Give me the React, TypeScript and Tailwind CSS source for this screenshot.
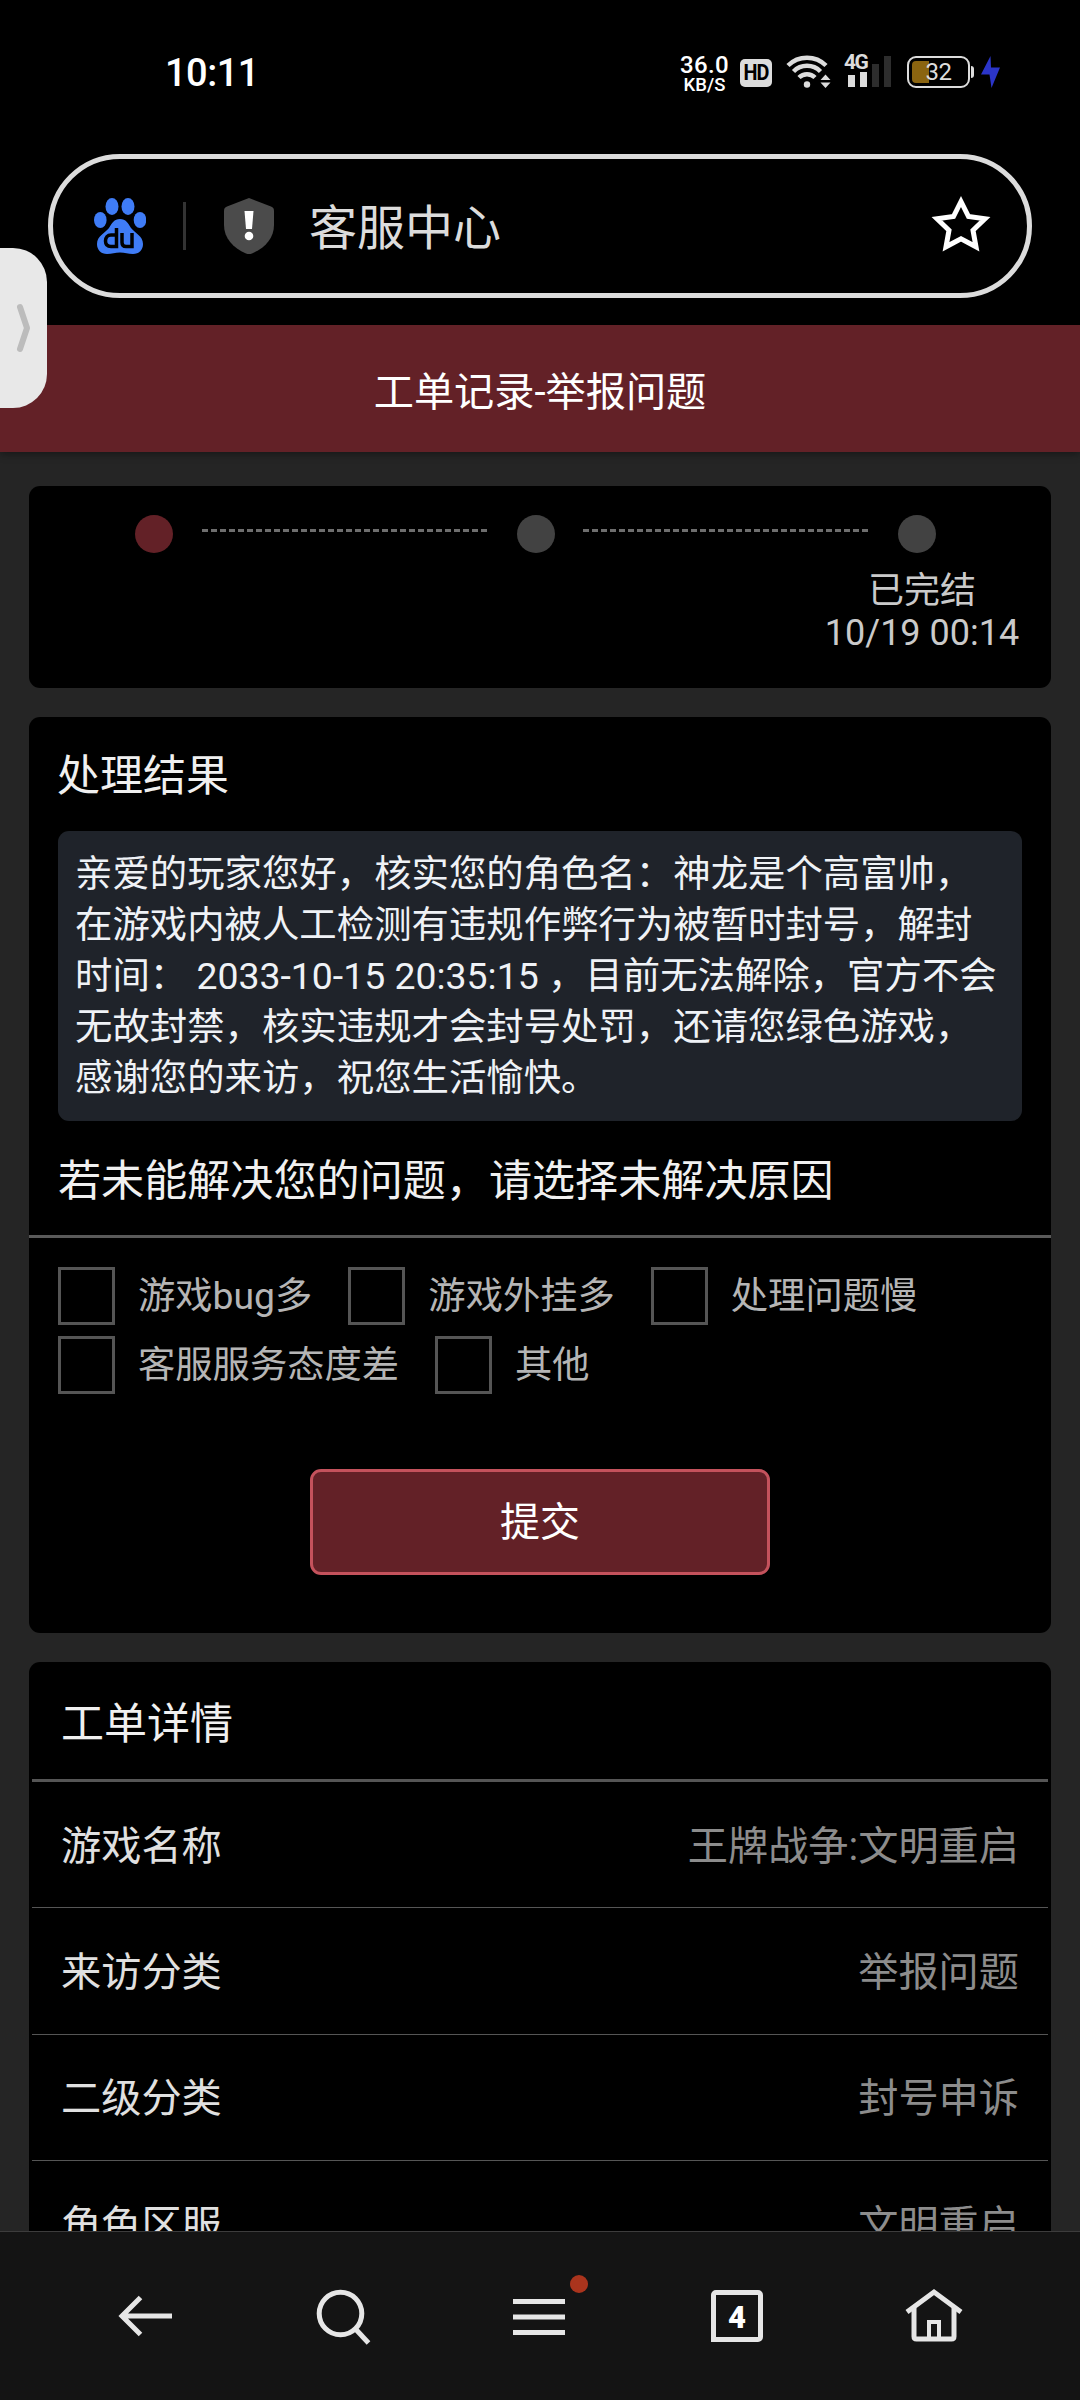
import type { ReactNode } from "react";

const RESULT_LINES = [
  "亲爱的玩家您好，核实您的角色名：神龙是个高富帅，",
  "在游戏内被人工检测有违规作弊行为被暂时封号，解封",
  "时间： 2033-10-15 20:35:15 ，目前无法解除，官方不会",
  "无故封禁，核实违规才会封号处罚，还请您绿色游戏，",
  "感谢您的来访，祝您生活愉快。",
];

const REASONS = [["游戏bug多", "游戏外挂多", "处理问题慢"], ["客服服务态度差", "其他"]];

const DETAILS = [
  { label: "游戏名称", value: "王牌战争:文明重启" },
  { label: "来访分类", value: "举报问题" },
  { label: "二级分类", value: "封号申诉" },
  { label: "角色区服", value: "文明重启" },
];

function StatusBar() {
  return (
    <div className="flex h-[88px] items-end justify-between pl-[165px] pr-[80px] text-white">
      <span className="text-[38px] font-medium leading-[30px] tracking-[-0.5px]">10:11</span>
      <div className="flex h-[34px] items-end">
        <div className="-mb-[6px] flex w-[51px] flex-col items-center font-medium">
          <span className="text-[24px] leading-[22px] tracking-[0.3px]">36.0</span>
          <span className="text-[18.500px] leading-[18px]">KB/S</span>
        </div>
        <div className="ml-[10px] mb-px flex h-[28px] w-[32px] items-center justify-center rounded-[5px] bg-[#dcdcdc] text-[22px] font-bold leading-none tracking-[-1px] text-black">
          <span className="scale-x-90">HD</span>
        </div>
        <svg className="ml-[14px]" width="46" height="34" viewBox="0 0 46 34" fill="none" stroke="#dcdcdc" strokeWidth="4.500">
          <path d="M2 11.500a27 27 0 0 1 38 0" />
          <path d="M7.500 17.500a19 19 0 0 1 27 0" />
          <path d="M13 23.500a11.500 11.500 0 0 1 16 0" />
          <circle cx="21" cy="30.500" r="3.200" fill="#dcdcdc" stroke="none" />
          <path d="M34.500 26h10l-5-5.500zM34.500 28.500h10l-5 5.500z" fill="#dcdcdc" stroke="none" />
        </svg>
        <div className="relative ml-[16px] mb-px flex items-end gap-[5px]">
          <span className="absolute -left-[4px] -top-[3px] text-[21px] font-bold leading-[18px] tracking-[-1.500px] text-[#dcdcdc]">4G</span>
          <div className="h-[12px] w-[7px] bg-[#dcdcdc]" />
          <div className="h-[15px] w-[7px] bg-[#dcdcdc]" />
          <div className="h-[23px] w-[7px] bg-[#2d2d2d]" />
          <div className="h-[31px] w-[7px] bg-[#2d2d2d]" />
        </div>
        <div className="relative ml-[16px] flex h-[32px] w-[63px] items-center justify-center rounded-[9px] border-2 border-[#dcdcdc] text-[24px] leading-none text-[#dcdcdc]">
          <div className="absolute left-[3px] top-[3px] h-[22px] w-[17px] rounded-l-[4px] bg-[#8a6410]" />
          <span className="relative tracking-[-0.5px]">32</span>
        </div>
        <div className="mb-[10px] ml-px h-[12px] w-[3px] rounded-r-sm bg-[#dcdcdc]" />
        <svg className="ml-[7px]" width="19" height="32" viewBox="0 0 19 32" fill="#2b35c9">
          <path d="M9.500 0L0 18.500h8.500L10.500 32 19 11.500h-9z" />
        </svg>
      </div>
    </div>
  );
}

function AddressBar() {
  return (
    <div className="mx-[48px] mt-[66px] flex h-[144px] items-center rounded-full border-[5px] border-[#dcdcdc] pl-[41px] pr-[36px]">
      <svg width="52" height="56" viewBox="0 0 52 56" fill="#3f7cf6">
        <ellipse cx="18" cy="8.500" rx="6.500" ry="8.500" />
        <ellipse cx="34" cy="8.500" rx="6.500" ry="8.500" />
        <ellipse cx="6.300" cy="22" rx="6.300" ry="8" />
        <ellipse cx="46" cy="22" rx="6.300" ry="8" />
        <path d="M26 21c6 0 8 4 11 9 4 5 12 8 12 16 0 6-4 10-10 10-5 0-8-1.500-13-1.500S18 56 13 56C7 56 3 52 3 46c0-8 8-11 12-16 3-5 5-9 11-9z" />
        <g fill="none" stroke="#000" strokeWidth="3.500">
          <path d="M22.500 30v18.500h-5.500c-3.500 0-5.500-2-5.500-5.500s2-6 5.500-6h5.500" />
          <path d="M28 35v9.500c0 3 1.500 4 4 4h6V35" />
        </g>
      </svg>
      <div className="ml-[37px] h-[48px] w-[3px] bg-[#333]" />
      <svg className="ml-[38px]" width="50" height="56" viewBox="0 0 50 56">
        <path d="M25 0l22 8.500c2 .8 3 2 3 4.500v14c0 13-9 23-22 28.500q-3 1-6 0C9 50 0 40 0 27V13c0-2.500 1-3.700 3-4.500z" fill="#4b4b4b" />
        <path d="M20.500 13h9l-1.500 18h-6z" fill="#fff" />
        <circle cx="25" cy="38" r="4.300" fill="#fff" />
      </svg>
      <span className="ml-[35px] flex-1 pt-[5px] text-[48px] leading-none text-[#dcdcdc]">客服中心</span>
      <svg className="mb-[6px]" width="60" height="57" viewBox="0 0 60 57" fill="none" stroke="#fff" strokeWidth="5">
        <path d="M30 6.500l7.500 15 16.500 2.300-12 11.500 3 16.500-15-8-15 8 3-16.500-12-11.500 16.500-2.300z" />
      </svg>
    </div>
  );
}

function Dash() {
  return (
    <div className="mt-[14px] h-[3px] w-[286px] bg-[repeating-linear-gradient(90deg,#6e6e6e_0_6px,transparent_6px_9px)]" />
  );
}

function Progress() {
  return (
    <section className="h-[202px] rounded-[11px] bg-black pt-[29px]">
      <div className="flex items-start justify-between pl-[106px] pr-[115px]">
        <div className="size-[38px] rounded-full bg-[#632127]" />
        <Dash />
        <div className="size-[38px] rounded-full bg-[#424242]" />
        <Dash />
        <div className="size-[38px] rounded-full bg-[#424242]" />
      </div>
      <div className="ml-auto mr-[31px] mt-[17px] w-[196px] whitespace-nowrap text-center text-[36px] leading-[42px] text-[#cacaca]">
        <p>已完结</p>
        <p>10/19 00:14</p>
      </div>
    </section>
  );
}

function Result() {
  return (
    <section className="mt-[29px] h-[916px] rounded-[11px] bg-black">
      <h2 className="px-[28px] pt-[29px] text-[43px] leading-[60px] text-[#f0f0f0]">处理结果</h2>
      <div className="mx-[29px] mt-[25px] h-[290px] whitespace-pre rounded-[11px] bg-[#1f232a] pl-[17px] pt-[18px] text-[37.400px] leading-[51px] text-[#eff2f6]">
        {RESULT_LINES.map((line) => (
          <p key={line}>{line}</p>
        ))}
      </div>
      <h2 className="mt-[31px] h-[83px] px-[29px] text-[43.100px] leading-[60px] text-[#f0f0f0]">
        若未能解决您的问题，请选择未解决原因
      </h2>
      <div className="h-[3px] bg-[#5a5a5a]" />
      <div className="mt-[29px] flex flex-col gap-[11px] pl-[29px]">
        {REASONS.map((row, i) => (
          <div key={i} className="flex gap-[36px]">
            {row.map((reason) => (
              <label key={reason} className="flex items-center">
                <span className="h-[58px] w-[57px] border-[3px] border-[#555]" />
                <span className="ml-[23px] text-[37.300px] leading-[54px] text-[#b5b5b5]">{reason}</span>
              </label>
            ))}
          </div>
        ))}
      </div>
      <button className="mx-auto mt-[75px] flex h-[106px] w-[460px] items-center justify-center rounded-[11px] border-[3px] border-[#c4525c] bg-[#632127] pt-[2px] text-[40px] leading-none text-white">
        提交
      </button>
    </section>
  );
}

function Details() {
  return (
    <section className="mt-[29px] rounded-t-[11px] bg-black px-[3px]">
      <h2 className="h-[120px] border-b-[3px] border-[#555] pl-[29px] pt-[2px] text-[43px] leading-[120px] text-[#f0f0f0]">工单详情</h2>
      {DETAILS.map((item) => (
        <div
          key={item.label}
          className="flex h-[126.400px] items-center justify-between border-b border-[#555] pl-[29px] pr-[29px] pt-[4px] text-[40.200px]"
        >
          <span className="text-[#e0e0e0]">{item.label}</span>
          <span className="text-[#8c8c8c]">{item.value}</span>
        </div>
      ))}
    </section>
  );
}

function NavItem({ children }: { children: ReactNode }) {
  return <div className="relative flex w-[197px] justify-center">{children}</div>;
}

function NavBar() {
  return (
    <nav className="relative flex h-[169px] shrink-0 justify-center border-t border-[#3c3c3c] bg-[#141414] pt-[56px]">
      <NavItem>
        <svg width="56" height="60" viewBox="0 0 56 60" fill="none" stroke="#e6e6e6" strokeWidth="5">
          <path d="M54 28H4M22.500 9.500L4 28l18.500 18.500" />
        </svg>
      </NavItem>
      <NavItem>
        <svg width="56" height="60" viewBox="0 0 56 60" fill="none" stroke="#e6e6e6" strokeWidth="5">
          <circle cx="25.500" cy="25.500" r="21.300" />
          <path d="M40.500 41l13 14" />
        </svg>
      </NavItem>
      <NavItem>
        <svg width="56" height="60" viewBox="0 0 56 60" stroke="#e6e6e6" strokeWidth="5">
          <path d="M1 13.500h52M1 29h52M1 44.500h52" />
        </svg>
        <span className="absolute -top-[13px] right-[51px] size-[18px] rounded-full bg-[#aa341d]" />
      </NavItem>
      <NavItem>
        <div className="mt-[2px] flex h-[52px] w-[52px] items-center justify-center rounded-[5px] rounded-bl-none border-[5px] border-[#e6e6e6] pt-[2px] text-[31px] font-black leading-none text-white">
          4
        </div>
      </NavItem>
      <NavItem>
        <svg width="58" height="60" viewBox="0 0 58 60" fill="none" stroke="#e6e6e6" strokeWidth="5">
          <path d="M2 24L29 4l27 20" />
          <path d="M9 20v28.500q0 2.500 2.500 2.500h35q2.500 0 2.500-2.500V20" />
          <path d="M24 51V34h10v17" strokeWidth="4" />
        </svg>
      </NavItem>
    </nav>
  );
}

export default function App() {
  return (
    <div className="relative flex h-[2400px] w-[1080px] flex-col overflow-hidden bg-[#252525] font-['Roboto','Noto_Sans_CJK_SC',sans-serif]">
      <div className="h-[325px] shrink-0 bg-black">
        <StatusBar />
        <AddressBar />
      </div>
      <h1 className="z-10 flex h-[127px] shrink-0 items-center justify-center bg-[#632127] pt-[9px] text-[40.200px] text-white shadow-[0_2px_8px_rgba(0,0,0,0.4)]">
        工单记录-举报问题
      </h1>
      <main className="min-h-0 flex-1 overflow-hidden px-[29px] pt-[34px]">
        <Progress />
        <Result />
        <Details />
      </main>
      <NavBar />
      <div className="absolute left-0 top-[248px] z-20 flex h-[160px] w-[47px] items-center rounded-r-[34px] bg-[#e8e8e8] pl-[16px]">
        <svg width="16" height="50" viewBox="0 0 16 50" fill="none" stroke="#bcbcbc" strokeWidth="6" strokeLinecap="round" strokeLinejoin="round">
          <path d="M4 4l7 21-7 21" />
        </svg>
      </div>
    </div>
  );
}
